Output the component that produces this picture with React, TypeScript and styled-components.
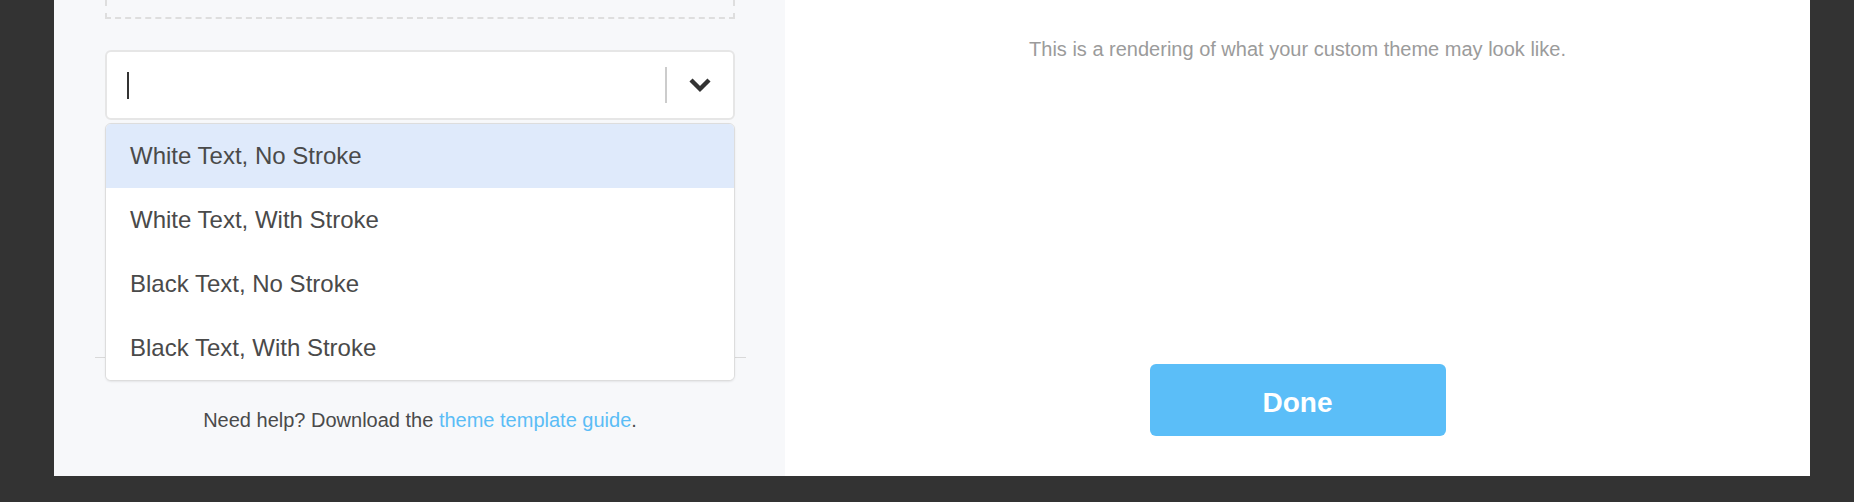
import React from "react";
import styled, { createGlobalStyle } from "styled-components";

const GlobalStyle = createGlobalStyle`
  html, body {
    margin: 0;
    padding: 0;
    background: #333333;
    font-family: "Liberation Sans", Arial, Helvetica, sans-serif;
  }
  * {
    box-sizing: border-box;
  }
`;

const Backdrop = styled.div`
  height: 502px;
  padding: 0 44px 26px 54px;
  background: #333333;
  overflow: hidden;
`;

const Modal = styled.div`
  display: flex;
  height: 476px;
  background: #ffffff;
`;

const Sidebar = styled.div`
  width: 731px;
  flex-shrink: 0;
  display: flex;
  flex-direction: column;
  padding: 0 50px 44px 51px;
  background: #f7f8fa;
`;

const DropZone = styled.div`
  height: 19px;
  border: 2px dashed #dedede;
  border-top: none;
`;

const SelectWrap = styled.div`
  position: relative;
  margin-top: 31px;
`;

const Control = styled.div`
  display: flex;
  align-items: center;
  height: 70px;
  padding-left: 20px;
  background: #ffffff;
  border: 2px solid #e6e6e6;
  border-radius: 6px;
`;

const ValueArea = styled.div`
  flex: 1;
  display: flex;
  align-items: center;
`;

const Caret = styled.span`
  display: block;
  width: 2px;
  height: 27px;
  background: #333333;
`;

const Separator = styled.span`
  width: 2px;
  height: 36px;
  background: #cccccc;
`;

const Indicator = styled.div`
  width: 66px;
  display: flex;
  align-items: center;
  justify-content: center;
  color: #333333;
`;

const Menu = styled.div`
  position: absolute;
  top: calc(100% + 3px);
  left: 0;
  right: 0;
  z-index: 2;
  background: #ffffff;
  border: 1px solid #dddddd;
  border-radius: 6px;
  box-shadow: 0 1px 2px rgba(0, 0, 0, 0.08);
  overflow: hidden;
`;

const Option = styled.div<{ $focused?: boolean }>`
  display: flex;
  align-items: center;
  height: 64px;
  padding: 0 24px;
  font-size: 24px;
  color: #4a4a4a;
  background: ${(p) => (p.$focused ? "#dfeafb" : "#ffffff")};
`;

const Rule = styled.hr`
  margin: 237px -11px 0 -10px;
  border: none;
  border-top: 1px solid #d9d9d9;
`;

const HelpText = styled.p`
  margin: 50px 0 0;
  text-align: center;
  font-size: 20px;
  line-height: 24px;
  color: #4a4a4a;
`;

const HelpLink = styled.a`
  color: #5bbdf6;
  text-decoration: none;
`;

const Preview = styled.div`
  flex: 1;
  display: flex;
  flex-direction: column;
  align-items: center;
  padding: 37px 0 40px;
  background: #ffffff;
`;

const Caption = styled.p`
  margin: 0;
  font-size: 20px;
  line-height: 24px;
  color: #9b9b9b;
`;

const Canvas = styled.div`
  flex: 1;
  align-self: stretch;
`;

const DoneButton = styled.button`
  width: 296px;
  height: 72px;
  padding: 6px 0 0;
  border: none;
  border-radius: 6px;
  background: #5bbef8;
  color: #ffffff;
  font-family: inherit;
  font-size: 28px;
  font-weight: 700;
  cursor: pointer;
`;

const options = [
  "White Text, No Stroke",
  "White Text, With Stroke",
  "Black Text, No Stroke",
  "Black Text, With Stroke",
];

const Chevron = () => (
  <svg width="24" height="16" viewBox="0 0 24 16" fill="none">
    <path d="M3 3 L12 12 L21 3" stroke="currentColor" strokeWidth="4.4" />
  </svg>
);

export default function App() {
  return (
    <>
      <GlobalStyle />
      <Backdrop>
        <Modal>
          <Sidebar>
            <DropZone />
            <SelectWrap>
              <Control>
                <ValueArea>
                  <Caret />
                </ValueArea>
                <Separator />
                <Indicator>
                  <Chevron />
                </Indicator>
              </Control>
              <Menu>
                {options.map((label, i) => (
                  <Option key={label} $focused={i === 0}>
                    {label}
                  </Option>
                ))}
              </Menu>
            </SelectWrap>
            <Rule />
            <HelpText>
              Need help? Download the <HelpLink href="#">theme template guide</HelpLink>.
            </HelpText>
          </Sidebar>
          <Preview>
            <Caption>This is a rendering of what your custom theme may look like.</Caption>
            <Canvas />
            <DoneButton>Done</DoneButton>
          </Preview>
        </Modal>
      </Backdrop>
    </>
  );
}
